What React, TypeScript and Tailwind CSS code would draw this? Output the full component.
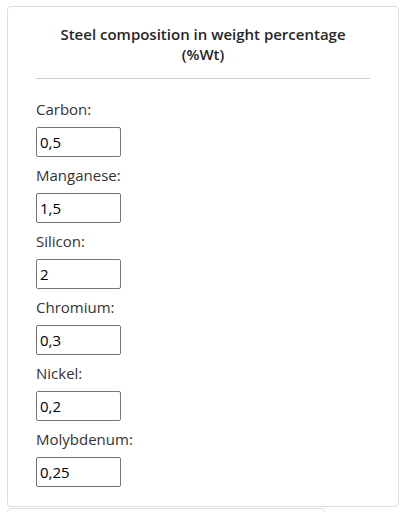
import React from "react";

const fields = [
  { label: "Carbon:", value: "0,5" },
  { label: "Manganese:", value: "1,5" },
  { label: "Silicon:", value: "2" },
  { label: "Chromium:", value: "0,3" },
  { label: "Nickel:", value: "0,2" },
  { label: "Molybdenum:", value: "0,25" },
];

export default function App() {
  return (
    <div className="w-[407px] h-[512px] overflow-hidden bg-white pt-[6px] pl-[7px] font-['Open_Sans',sans-serif]">
      <div className="w-[392px] h-[501px] border border-[#dedede] rounded-[4px] px-[28px] pt-[17px]">
        <h2 className="mx-auto max-w-[300px] text-center text-[15px] leading-[20px] font-semibold text-[#262626]">
          Steel composition in weight percentage (%Wt)
        </h2>
        <hr className="mt-[14px] border-0 h-px bg-[#cccccc]" />
        <div className="mt-[18px] flex flex-col">
          {fields.map((f) => (
            <div key={f.label} className="flex flex-col">
              <label className="text-[15px] leading-[24px] text-[#333333]">{f.label}</label>
              <input
                readOnly
                value={f.value}
                className="mt-[6px] mb-[6px] w-[85px] h-[30px] border border-[#767676] rounded-[2px] px-[3px] text-[15px] text-black outline-none font-['Open_Sans',sans-serif]"
              />
            </div>
          ))}
        </div>
      </div>
      <div className="mt-[1px] w-[318px] h-[40px] border border-[#dedede] rounded-[4px]" />
    </div>
  );
}
